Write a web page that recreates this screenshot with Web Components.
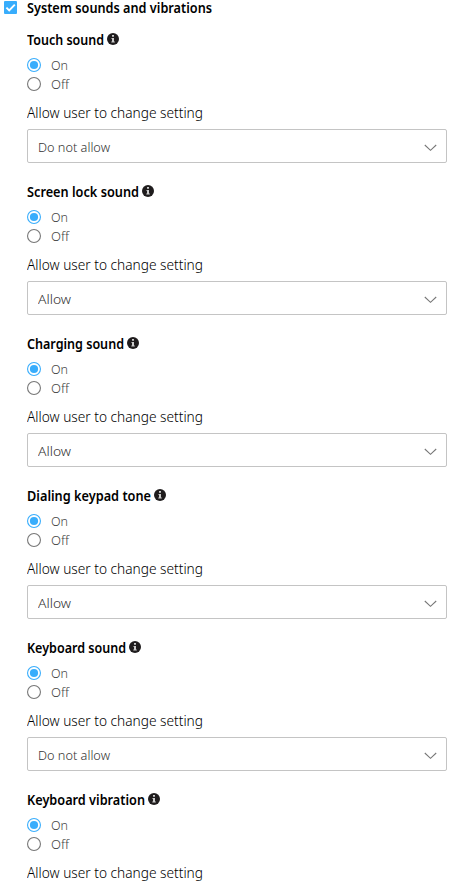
<!DOCTYPE html>
<html lang="en">
<head>
<meta charset="utf-8">
<title>System sounds and vibrations</title>
<style>
html, body { margin: 0; background: #fff; }
body { height: 885px; overflow: hidden; font-family: "Noto Sans", "Open Sans", sans-serif; font-size: 14px; color: #000; }
</style>
</head>
<body>
<sound-settings></sound-settings>
<script>
// A line of text narrowed horizontally to the width given in its attribute.
customElements.define('fit-text', class extends HTMLElement {
  connectedCallback() {
    const root = this.attachShadow({ mode: 'open' });
    root.innerHTML = `<style>
      :host { display: block; flex: none; white-space: nowrap; line-height: var(--line, 20px); height: var(--line, 20px); }
      span { display: inline-block; transform-origin: 0 50%; }
    </style><span></span>`;
    const span = root.querySelector('span');
    span.textContent = this.getAttribute('text');
    const target = Number(this.getAttribute('width'));
    this.style.width = target + 'px';
    span.style.transform = `scaleX(${target / span.getBoundingClientRect().width})`;
  }
});

customElements.define('info-icon', class extends HTMLElement {
  connectedCallback() {
    this.attachShadow({ mode: 'open' }).innerHTML = `<style>
      :host { display: block; width: 12px; height: 12px; flex: none; } svg { display: block; }
    </style><svg width="12" height="12" viewBox="0 0 12 12"><circle cx="6" cy="6" r="6" fill="#1f1c1d"/><path d="M5 2h2v1.8H5zM4.5 5H7v3.6h.8v1H4.3v-1H5V6h-.5z" fill="#ccc"/></svg>`;
  }
});

customElements.define('check-box', class extends HTMLElement {
  connectedCallback() {
    this.attachShadow({ mode: 'open' }).innerHTML = `<style>
      :host { display: block; width: 13px; height: 13px; flex: none; } svg { display: block; }
    </style><svg width="13" height="13" viewBox="0 0 13 13"><rect width="13" height="13" rx="1" fill="#38adfc"/><path d="M2.4 6.7 5.2 9.5 10.8 3.6" fill="none" stroke="#fff" stroke-width="1.9"/></svg>`;
  }
});

customElements.define('radio-option', class extends HTMLElement {
  connectedCallback() {
    const on = this.hasAttribute('checked');
    this.attachShadow({ mode: 'open' }).innerHTML = `<style>
      :host { display: flex; align-items: center; gap: 10px; height: 19px; font-size: 13px; color: #444; font-weight: 300; }
      svg { display: block; flex: none; }
    </style><svg width="14" height="14" viewBox="0 0 14 14"><circle cx="7" cy="7" r="6.45" fill="#fff" stroke="${on ? '#38adfc' : '#777'}" stroke-width="1.1"/>${on ? '<circle cx="7" cy="7" r="4.1" fill="#38adfc"/>' : ''}</svg>
    <fit-text text="${this.getAttribute('label')}" width="${this.getAttribute('width')}"></fit-text>`;
  }
});

customElements.define('select-box', class extends HTMLElement {
  connectedCallback() {
    const value = this.getAttribute('value');
    this.attachShadow({ mode: 'open' }).innerHTML = `<style>
      :host { display: flex; align-items: center; justify-content: space-between; box-sizing: border-box; width: 420px; height: 34px; padding: 2px 9px 0 10px; border: 1px solid #c4c4c4; border-radius: 2px; font-size: 13px; font-weight: 300; color: #333; }
      svg { display: block; margin-top: 1px; }
    </style><fit-text text="${value}" width="${value === 'Allow' ? 33 : 72}"></fit-text>
    <svg width="13" height="8" viewBox="0 0 13 8"><path d="M.8 1 6.5 6.3 12.2 1" fill="none" stroke="#777" stroke-width="1.1"/></svg>`;
  }
});

customElements.define('sound-setting', class extends HTMLElement {
  connectedCallback() {
    const value = this.getAttribute('value');
    this.attachShadow({ mode: 'open' }).innerHTML = `<style>
      :host { display: block; height: 152px; }
      .title { display: flex; align-items: center; gap: 3px; height: 31px; font-weight: 600; }
      .title info-icon { margin-bottom: 1px; }
      .label { padding: 10px 0 6px; font-weight: 300; color: #000; }
    </style>
    <div class="title"><fit-text text="${this.getAttribute('name')}" width="${this.getAttribute('width')}"></fit-text><info-icon></info-icon></div>
    <radio-option label="On" width="17" checked></radio-option>
    <radio-option label="Off" width="18"></radio-option>
    <div class="label"><fit-text text="Allow user to change setting" width="176"></fit-text></div>
    ${value ? `<select-box value="${value}"></select-box>` : ''}`;
  }
});

customElements.define('sound-settings', class extends HTMLElement {
  connectedCallback() {
    const items = [
      ['Touch sound', 77, 'Do not allow'], ['Screen lock sound', 112, 'Allow'],
      ['Charging sound', 97, 'Allow'], ['Dialing keypad tone', 124, 'Allow'],
      ['Keyboard sound', 99, 'Do not allow'], ['Keyboard vibration', 118, '']
    ];
    this.attachShadow({ mode: 'open' }).innerHTML = `<style>
      :host { display: block; height: 885px; overflow: hidden; }
      header { --line: 16px; display: flex; align-items: center; gap: 10px; height: 16px; padding: 0 0 8px 4px; font-weight: 600; }
      check-box { margin-bottom: 1px; }
      section { padding-left: 27px; }
    </style>
    <header><check-box></check-box><fit-text text="System sounds and vibrations" width="185"></fit-text></header>
    <section>${items.map(([n, w, v]) => `<sound-setting name="${n}" width="${w}" value="${v}"></sound-setting>`).join('')}</section>`;
  }
});
</script>
</body>
</html>
